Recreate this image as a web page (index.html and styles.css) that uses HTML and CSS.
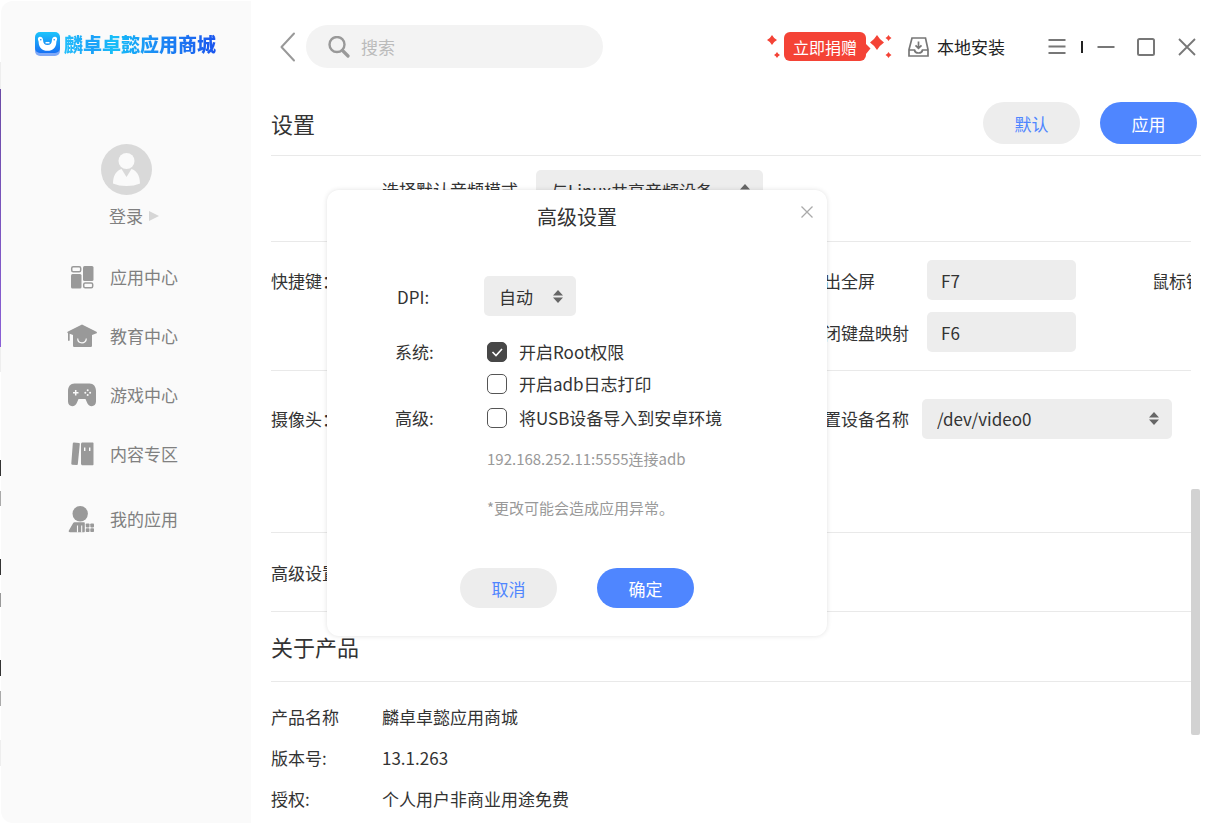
FILE: index.html
```html
<!DOCTYPE html>
<html lang="zh-CN">
<head>
<meta charset="utf-8">
<title>麟卓卓懿应用商城</title>
<link rel="stylesheet" href="styles.css">
</head>
<body>
<div class="backdrop"></div>
<div class="app">
  <aside class="sidebar">
    <div class="brand">
      <svg class="brand-mark" viewBox="0 0 25 24" width="25" height="24" aria-hidden="true">
        <defs><linearGradient id="mark" x1="0" y1="0" x2="0" y2="1"><stop offset="0" stop-color="#1cc4fb"/><stop offset="1" stop-color="#1670f4"/></linearGradient></defs>
        <rect x="0" y="3" width="25" height="21" rx="5" fill="#7fa8f6"/>
        <rect width="25" height="21" rx="5" fill="url(#mark)"/>
        <path d="M5 4.800c-1.500 0-2.500 1.400-2 2.900.3.900.7 1.500.7 2.700C3.700 15 7.200 18.800 12.500 18.800S21.300 15 21.300 10.400c0-1.200.4-1.800.7-2.700.5-1.500-.5-2.900-2-2.900-1.900 0-3.100 1.600-3.100 3.600 0 2.700-1.600 4.600-4.400 4.600S8.100 11.100 8.100 8.400c0-2-1.200-3.600-3.100-3.600z" fill="#fff"/>
        <path d="M10.500 10.700h4" stroke="#fff" stroke-width="1.500"/>
        <circle cx="5.800" cy="7.800" r=".8" fill="#1b8cf5"/><circle cx="19.200" cy="7.800" r=".8" fill="#1b8cf5"/>
      </svg>
      <span class="brand-name">麟卓卓懿应用商城</span>
    </div>
    <a class="account" href="#login">
      <svg viewBox="0 0 51 51" width="51" height="51" aria-hidden="true">
        <circle cx="25.500" cy="25.500" r="25.500" fill="#d9d9d9"/>
        <circle cx="25.500" cy="17" r="8" fill="#fafafa"/>
        <path d="M20.500 25l5 8 5-8c5 1.500 8.500 6.500 8.500 14.500-4 1.700-8.500 2.500-13.500 2.500S16 41.200 12 39.500C12 31.500 15.500 26.500 20.500 25z" fill="#fafafa"/>
      </svg>
      <span class="login">登录<svg viewBox="0 0 10 10" width="10" height="10" aria-hidden="true"><path d="M0 0l10 5-10 5z" fill="#d6d6d6"/></svg></span>
    </a>
    <nav class="menu">
      <a href="#apps"><svg viewBox="0 0 30 26" width="30" height="26" fill="#999" aria-hidden="true"><rect x="4.700" y="2.700" width="9" height="5" rx="1.500" fill="none" stroke="#999" stroke-width="1.500"/><rect x="4" y="10" width="10.500" height="14.500" rx="1.500"/><rect x="16" y="2" width="10.500" height="15" rx="1.500"/><rect x="16.700" y="18.900" width="9" height="4.900" rx="1.500" fill="none" stroke="#999" stroke-width="1.500"/></svg>应用中心</a>
      <a href="#education"><svg viewBox="0 0 30 26" width="30" height="26" fill="#999" aria-hidden="true"><path d="M15 1.500L29 8.500c1.300.7 1.300 1.600 0 2.100L25 12v10.500c0 1-.6 1.500-1.500 1.500h-16c-.9 0-1.500-.5-1.500-1.500V12l-3.300-1.300V17c0 1.300-1.700 1.300-1.700 0v-6.700C0 9.600.1 9 1 8.500z"/><path d="M10.700 15.500c0 5.700 8.600 5.700 8.600 0" fill="none" stroke="#fafafa" stroke-width="1.200"/></svg>教育中心</a>
      <a href="#games"><svg viewBox="0 0 30 26" width="30" height="26" fill="#999" aria-hidden="true"><path d="M7.500 1.500h15C26.500 1.500 29 4.500 29 9v10.500c0 6-7.500 6-9 1L18.500 17h-7L10 20.500c-1.500 5-9 5-9-1V9c0-4.500 2.500-7.500 6.500-7.500z"/><path d="M8.700 8v5.500M6 10.700h5.500" stroke="#fafafa" stroke-width="1.500"/><g fill="#fafafa"><circle cx="20.700" cy="8.300" r="1"/><circle cx="20.700" cy="13" r="1"/><circle cx="18.300" cy="10.700" r="1"/><circle cx="23.100" cy="10.700" r="1"/></g></svg>游戏中心</a>
      <a href="#content"><svg viewBox="0 0 30 26" width="30" height="26" fill="#999" aria-hidden="true"><path d="M6.800 1.500l5.200.5c.6.100.9.500.8 1.100l-2 20.200c-.1.600-.4.900-1 .8l-4.700-.4c-.6-.1-.9-.5-.8-1.100L5.800 2.400c.1-.6.400-.9 1-.9z"/><path d="M15.500 1.500h10c.6 0 1 .4 1 1v20.700c0 .6-.4 1-1 1h-10c-.8 0-1.500-.6-1.500-1.500V3c0-.9.700-1.500 1.500-1.500z"/><path d="M17.700 6.500v3.500M22.700 6.500v3.500" stroke="#fafafa" stroke-width="1.400"/></svg>内容专区</a>
      <a class="mine" href="#mine"><svg viewBox="0 0 30 30" width="30" height="30" fill="#999" aria-hidden="true"><circle cx="13.200" cy="9.700" r="7.700"/><path d="M7.500 18.300h9.300c.7 0 1 .4 1 1v8.200c0 .4-.3.700-.7.700H3c-1.200 0-1.700-1-1-2l4.200-7.100c.3-.5.700-.8 1.300-.8z"/><path d="M10.500 21.500v7M14.700 21.500v7" stroke="#fafafa" stroke-width="1.100"/><g><rect x="18.800" y="19.500" width="3.700" height="3.900" rx=".8"/><rect x="23.300" y="19.500" width="3.700" height="3.900" rx=".8"/><rect x="18.800" y="24.200" width="3.700" height="3.900" rx=".8"/><rect x="23.300" y="24.200" width="3.700" height="3.900" rx=".8"/></g></svg>我的应用</a>
    </nav>
  </aside>

  <main class="main">
    <header class="toolbar">
      <button class="icon-button back" aria-label="返回"><svg viewBox="0 0 16 30" width="16" height="30" fill="none" stroke="#999" stroke-width="2" stroke-linecap="round" stroke-linejoin="round"><path d="M14 1.500L1.500 15 14 28.500"/></svg></button>
      <label class="search">
        <svg viewBox="0 0 22 22" width="22" height="22" fill="none" stroke="#999" aria-hidden="true"><circle cx="9" cy="8.500" r="7.500" stroke-width="2.400"/><path d="M14.500 14.500l5.500 5.500" stroke-width="3.200" stroke-linecap="round"/></svg>
        <input type="search" placeholder="搜索" aria-label="搜索">
      </label>
      <button class="donate"><svg viewBox="0 0 14 24" width="14" height="24" fill="#f44336" aria-hidden="true"><path d="M5 0q1.700 3.300 5 5-3.300 1.700-5 5Q3.300 6.700 0 5q3.300-1.700 5-5zM10 17q1 2 3 3-2 1-3 3-1-2-3-3 2-1 3-3z"/></svg><span class="donate-tag">立即捐赠</span><svg viewBox="0 0 26 24" width="26" height="24" fill="#f44336" aria-hidden="true"><path d="M0 9l4.500 4.500L0 19z"/><path d="M11 0q2.800 4.700 7 7.500-4.200 2.800-7 7.500-2.800-4.700-7-7.500 4.200-2.800 7-7.500zM22.500 0q1 2 3 3-2 1-3 3-1-2-3-3 2-1 3-3zM22.500 17q1 2 3 3-2 1-3 3-1-2-3-3 2-1 3-3z"/></svg></button>
      <button class="install"><svg viewBox="0 0 21 20" width="21" height="20" fill="none" stroke="#777" stroke-width="1.700" aria-hidden="true"><path d="M4 1h13.500l2.500 11.500V19H1v-6.500zM1 13h5.500c.3 2 1.500 3 4 3s3.700-1 4-3H20M10.500 4.500v6.500M7.500 8.300l3 3 3-3"/></svg>本地安装</button>
      <div class="window-controls">
        <button class="icon-button" aria-label="菜单"><svg viewBox="0 0 18 18" width="18" height="18" stroke="#777" stroke-width="1.800"><path d="M.5 2h17M.5 8.500h17M.5 15h17"/></svg></button>
        <span class="divider"></span>
        <button class="icon-button" aria-label="最小化"><svg viewBox="0 0 18 18" width="18" height="18" stroke="#777" stroke-width="2"><path d="M.5 9h17"/></svg></button>
        <button class="icon-button maximize" aria-label="最大化"><svg viewBox="0 0 18 18" width="18" height="18" fill="none" stroke="#777" stroke-width="2"><rect x="1" y="1" width="16" height="16" rx="1.500"/></svg></button>
        <button class="icon-button close" aria-label="关闭"><svg viewBox="0 0 18 18" width="18" height="18" stroke="#777" stroke-width="1.800"><path d="M1 1l16 16M17 1L1 17"/></svg></button>
      </div>
    </header>

    <section class="page-head">
      <h1>设置</h1>
      <div class="actions"><button class="pill">默认</button><button class="pill primary">应用</button></div>
    </section>

    <div class="scroll-area">
      <div class="settings">
        <section class="row audio">
          <label for="audio">选择默认音频模式</label>
          <span class="select"><select id="audio"><option>与Linux共享音频设备</option></select><svg viewBox="0 0 10 13" width="10" height="13" fill="#666" aria-hidden="true"><path d="M5 0l5 5.500H0zM5 13l5-5.500H0z"/></svg></span>
        </section>
        <section class="row keys">
          <span class="row-title">快捷键：</span>
          <div class="fields">
            <label for="fullscreen">退出全屏</label><input id="fullscreen" value="F7"><span class="mouse">鼠标锁定</span>
            <label for="keymap">关闭键盘映射</label><input id="keymap" value="F6">
          </div>
        </section>
        <section class="row camera">
          <span class="row-title">摄像头：</span>
          <div class="device"><label for="device">设置设备名称</label>
          <span class="select"><select id="device"><option>/dev/video0</option></select><svg viewBox="0 0 10 13" width="10" height="13" fill="#666" aria-hidden="true"><path d="M5 0l5 5.500H0zM5 13l5-5.500H0z"/></svg></span></div>
        </section>
        <section class="row advanced">高级设置</section>
        <h2 class="row about">关于产品</h2>
        <dl class="product">
          <dt>产品名称</dt><dd>麟卓卓懿应用商城</dd>
          <dt>版本号:</dt><dd>13.1.263</dd>
          <dt>授权:</dt><dd>个人用户非商业用途免费</dd>
        </dl>
      </div>
      <div class="track"><div class="thumb"></div></div>
    </div>
  </main>
</div>

<div class="dialog" role="dialog" aria-labelledby="dialog-title">
  <h2 id="dialog-title">高级设置</h2>
  <button class="icon-button dismiss" aria-label="关闭"><svg viewBox="0 0 12 12" width="12" height="12" stroke="#aaa" stroke-width="1.300"><path d="M.5 .5l11 11M11.500 .5l-11 11"/></svg></button>
  <div class="form">
    <label class="dpi-label" for="dpi">DPI:</label>
    <span class="select"><select id="dpi"><option>自动</option></select><svg viewBox="0 0 10 13" width="10" height="13" fill="#666" aria-hidden="true"><path d="M5 0l5 5.500H0zM5 13l5-5.500H0z"/></svg></span>
    <span class="group-title system">系统:</span>
    <div class="system">
      <label class="check"><input type="checkbox" checked>开启Root权限</label>
      <label class="check"><input type="checkbox">开启adb日志打印</label>
    </div>
    <span class="group-title usb">高级:</span>
    <label class="check usb"><input type="checkbox">将USB设备导入到安卓环境</label>
  </div>
  <p class="note address">192.168.252.11:5555连接adb</p>
  <p class="note">*更改可能会造成应用异常。</p>
  <div class="dialog-actions"><button class="pill">取消</button><button class="pill primary">确定</button></div>
</div>
</body>
</html>
```
FILE: styles.css
```css
* { box-sizing: border-box; }
body, button, input, select { font-family: "Noto Sans CJK SC", sans-serif; font-size: 17px; color: #333; }
body { margin: 0; height: 100vh; overflow: hidden; position: relative; line-height: 24px; background: #fff; }
h1, h2, p, dl, dd { margin: 0; font-weight: 400; }
a { color: inherit; text-decoration: none; }
button { border: 0; padding: 0; background: none; line-height: 24px; white-space: nowrap; }
svg { display: block; flex: none; }

.backdrop { position: absolute; left: 0; top: 0; width: 1px; height: 100%; background: linear-gradient(#fff 62px, #eee 62px 89px, #6b4ba6 89px, #8a5fd6 347px, #eee 347px 372px, #fff 372px 460px, #333 460px 476px, #fff 476px 491px, #aaa 491px 506px, #fff 506px 559px, #333 559px 575px, #fff 575px 593px, #999 593px 607px, #fff 607px 660px, #333 660px 676px, #fff 676px 691px, #aaa 691px 706px, #fff 706px 740px, #eee 740px 766px, #fff 766px); }
.app { display: flex; height: 100%; padding-left: 1px; }

/* Sidebar */
.sidebar { width: 250px; flex: none; background: #fafafa; border-radius: 12px 0 0 12px; margin-top: 1px; }
.brand { display: flex; align-items: center; gap: 4px; padding: 31px 0 0 34px; height: 55px; }
.brand-name { font-size: 19px; font-weight: 900; line-height: 24px; white-space: nowrap; color: transparent; background: linear-gradient(90deg, #24c0fb, #1ba0f8 20%, #18bff8 32%, #17a8f7 45%, #1b8df5 60%, #1a55ee); -webkit-background-clip: text; background-clip: text; }
.account { display: flex; flex-direction: column; align-items: center; gap: 9px; margin-top: 88px; color: #808080; }
.login { display: flex; align-items: center; gap: 6px; padding-left: 16px; }
.menu { display: flex; flex-direction: column; padding: 19px 0 0 66px; color: #808080; }
.menu a { display: flex; align-items: center; gap: 13px; height: 59px; }
.menu .mine { height: 71px; }

/* Toolbar */
.main { flex: 1; min-width: 0; display: flex; flex-direction: column; padding: 0 15px 0 20px; }
.toolbar { display: flex; align-items: center; height: 93px; flex: none; }
.icon-button { display: flex; }
.back { margin: 0 10px 0 9px; }
.search { display: flex; align-items: center; gap: 11px; width: 297px; height: 43px; padding: 0 22px; border-radius: 22px; background: #f3f3f3; }
.search input { flex: 1; min-width: 0; border: 0; padding: 0; background: none; outline: 0; }
.search input::placeholder { color: #bbb; opacity: 1; }
.donate { display: flex; align-items: center; margin-left: auto; gap: 3px; }
.donate-tag { padding: 0 9px; height: 29px; line-height: 30px; border-radius: 6px; background: #f44336; color: #fff; font-size: 16px; margin-right: -3px; }
.install { display: flex; align-items: center; gap: 8px; margin-left: 16px; color: #222; }
.window-controls { display: flex; align-items: center; gap: 15px; margin: 0 5px 0 43px; }
.divider { width: 2px; height: 12px; background: #222; margin-right: -1px; }
.maximize { margin-left: 7px; }
.close { margin-left: 8px; }

/* Settings page */
.page-head { display: flex; justify-content: space-between; padding: 9px 4px 11px 0; border-bottom: 1px solid #e9e9e9; }
h1, .about { font-size: 22px; line-height: 42px; }
.actions { display: flex; gap: 20px; }
.pill { width: 97px; height: 42px; padding-top: 2px; border-radius: 21px; background: #ededed; color: #4f86ff; }
.primary { background: #4f86ff; color: #fff; }

.scroll-area { display: flex; flex: 1; min-height: 0; margin-right: 1px; }
.settings { flex: 1; min-width: 0; overflow: hidden; }
.row { border-bottom: 1px solid #e9e9e9; }
.audio { display: flex; align-items: center; gap: 18px; padding: 14px 0 31px 111px; }
.audio .select { width: 227px; }
.select { position: relative; display: block; }
.select select { width: 100%; height: 40px; appearance: none; border: 0; border-radius: 5px; background: #ededed; padding: 0 15px; }
.select svg { position: absolute; right: 13px; top: 14px; pointer-events: none; }
.keys, .camera { display: flex; }
.row-title { width: 111px; line-height: 42px; flex: none; }
.keys { padding: 18px 0; height: 129px; }
.fields { display: grid; grid-template-columns: 120px 149px 92px; grid-auto-rows: 40px; row-gap: 12px; margin-left: 425px; line-height: 42px; white-space: nowrap; }
.fields input { width: 149px; height: 40px; border: 0; border-radius: 5px; padding: 0 14px; background: #ededed; }
.mouse { padding-left: 76px; }
.camera { padding: 27px 0 94px; height: 162px; }
.device { display: flex; gap: 13px; margin-left: 425px; line-height: 42px; white-space: nowrap; }
.device .select { width: 250px; }
.advanced { padding: 28px 0 26px; }
.about { padding: 13px 0 14px; }
.product { display: grid; grid-template-columns: 111px 1fr; line-height: 41px; padding-top: 14px; }
.track { width: 9px; }
.thumb { height: 246px; margin-top: 333px; border-radius: 2px; background: #d2d2d2; }

/* Advanced settings dialog */
.dialog { position: absolute; left: 327px; top: 190px; width: 500px; padding: 15px 0 28px; border-radius: 12px; background: #fff; box-shadow: 0 0 5px rgba(0, 0, 0, .12); }
.dialog h2 { font-size: 20px; text-align: center; }
.dismiss { position: absolute; right: 14px; top: 16px; }
.form { display: grid; grid-template-columns: 89px 1fr; padding: 47px 0 0 68px; align-items: start; }
.form > .select { width: 92px; }
.dpi-label { line-height: 42px; padding-left: 2px; }
.group-title { line-height: 32px; }
.system { margin-top: 18px; }
.usb { margin-top: 2px; }
.check { display: flex; align-items: center; gap: 12px; height: 32px; line-height: 32px; padding-left: 3px; }
.check input { appearance: none; width: 20px; height: 20px; margin: 0; border: 1px solid #555; border-radius: 5px; background: #fff; }
.check input:checked { border-color: #474747; background: #474747 url("data:image/svg+xml,%3Csvg xmlns='http://www.w3.org/2000/svg' viewBox='0 0 18 18'%3E%3Cpath d='M4.500 9l3.500 3.500L14 6' fill='none' stroke='%23fff' stroke-width='1.600'/%3E%3C/svg%3E"); }
.note { padding-left: 160px; font-size: 15px; color: #999; margin-top: 25px; }
.address { margin-top: 13px; }
.dialog-actions { display: flex; justify-content: center; gap: 40px; margin-top: 48px; }
.dialog .pill { height: 40px; }
```
